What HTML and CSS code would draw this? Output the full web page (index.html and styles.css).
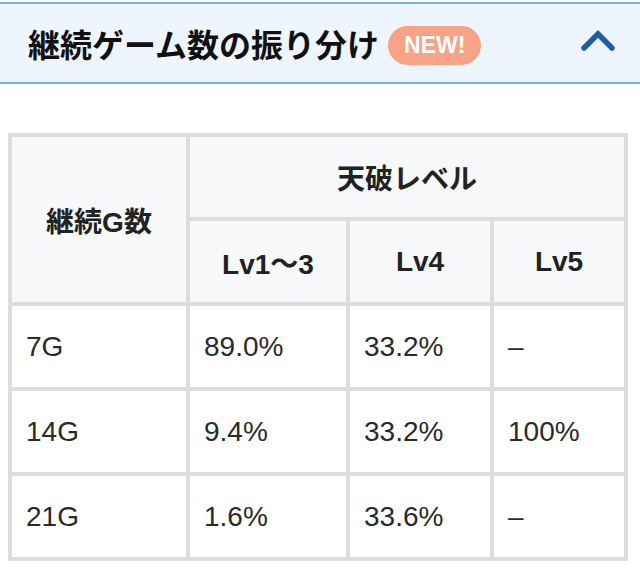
FILE: index.html
```html
<!DOCTYPE html>
<html lang="ja">
<head>
<meta charset="utf-8">
<link rel="stylesheet" href="styles.css">
</head>
<body>
<div class="section-head">
  <h2 class="title">継続ゲーム数の振り分け</h2>
  <span class="badge">NEW!</span>
  <svg class="chevron" width="36" height="24" viewBox="0 0 36 24"><polyline points="4,19 18,5 32,19" fill="none" stroke="#1d5ea8" stroke-width="5.5" stroke-linecap="round" stroke-linejoin="miter"/></svg>
</div>
<table class="dist">
  <colgroup>
    <col class="c1"><col class="c2"><col class="c3"><col class="c4">
  </colgroup>
  <tr class="hrow1">
    <th rowspan="2">継続G数</th>
    <th colspan="3">天破レベル</th>
  </tr>
  <tr class="hrow2">
    <th>Lv1〜3</th>
    <th>Lv4</th>
    <th>Lv5</th>
  </tr>
  <tr><td>7G</td><td>89.0%</td><td>33.2%</td><td>–</td></tr>
  <tr><td>14G</td><td>9.4%</td><td>33.2%</td><td>100%</td></tr>
  <tr><td>21G</td><td>1.6%</td><td>33.6%</td><td>–</td></tr>
</table>
</body>
</html>
```
FILE: styles.css
```css
html, body {
  margin: 0;
  padding: 0;
  background: #ffffff;
}
body {
  padding-top: 2px;
  font-family: "Liberation Sans", "Noto Sans CJK JP", sans-serif;
}
.section-head {
  display: flex;
  align-items: center;
  height: 78px;
  background: #eef5fe;
  border-top: 2px solid #74b4f6;
  border-bottom: 2px solid #74b4f6;
  padding: 0 24px 0 28px;
}
.title {
  margin: 0;
  font-family: "Noto Sans CJK JP", sans-serif;
  font-size: 32px;
  font-weight: 700;
  color: #111111;
  line-height: 1;
}
.badge {
  margin-left: 9px;
  margin-top: 4px;
  height: 39px;
  padding: 0 16px;
  border-radius: 20px;
  background: #f8a386;
  color: #ffffff;
  font-family: "Liberation Sans", sans-serif;
  font-weight: 700;
  font-size: 23px;
  display: flex;
  align-items: center;
}
.chevron {
  margin-left: auto;
  margin-top: -4px;
  display: block;
}
.dist {
  margin: 49px 0 0 8px;
  width: 620px;
  border-collapse: separate;
  border-spacing: 0;
  border-left: 4px solid #dddddd;
  border-top: 4px solid #dddddd;
  table-layout: fixed;
  color: #2a2a2a;
  font-size: 28px;
}
.dist th, .dist td {
  border-right: 4px solid #dddddd;
  border-bottom: 4px solid #dddddd;
  padding: 0 14px;
  box-sizing: border-box;
}
.dist th {
  background: #f7f8fa;
  font-weight: 700;
  text-align: center;
  color: #222222;
  padding: 0;
}
.dist td {
  text-align: left;
  height: 85px;
}
.hrow1 th { height: 84px; }
.hrow2 th { height: 85px; }
.c1 { width: 178px; }
.c2 { width: 160px; }
.c3 { width: 144px; }
.c4 { width: 134px; }
```
